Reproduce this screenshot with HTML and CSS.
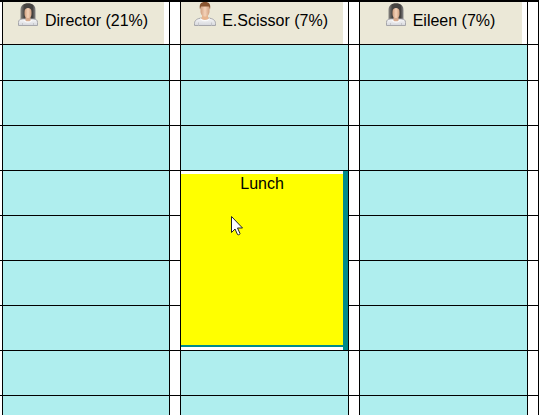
FILE: index.html
```html
<!DOCTYPE html>
<html lang="en">
<head>
<meta charset="utf-8">
<title>Staff schedule</title>
<link rel="stylesheet" href="styles.css">
</head>
<body>
<svg class="defs" aria-hidden="true">
  <defs>
    <linearGradient id="shirt" x1="0" y1="0" x2="0" y2="1">
      <stop offset="0" stop-color="#f8f8f9"/><stop offset="1" stop-color="#d6d7dc"/>
    </linearGradient>
    <linearGradient id="hair" x1="0" y1="0" x2="1" y2="0">
      <stop offset="0" stop-color="#8a8885"/><stop offset=".25" stop-color="#484542"/><stop offset=".8" stop-color="#44413f"/><stop offset="1" stop-color="#888"/>
    </linearGradient>
    <linearGradient id="skin" x1="0" y1="0" x2="1" y2="0">
      <stop offset="0" stop-color="#cf9f7f"/><stop offset=".5" stop-color="#f5d3b9"/><stop offset="1" stop-color="#cf9f7f"/>
    </linearGradient>
    <symbol id="woman" viewBox="0 0 22 24">
      <path d="M3.500 19V8C3.500 3.500 6.500 1.200 11 1.200S18.500 3.500 18.500 8v11z" fill="url(#hair)"/>
      <path d="M1.500 23.500v-3c0-2.500 1.500-3.500 4-3.500h11c2.500 0 4 1 4 3.500v3z" fill="url(#shirt)" stroke="#a6a6aa"/>
      <path d="M8.500 14h5v4c0 2-5 2-5 0z" fill="#d8ab8e"/>
      <path d="M7.500 10C7.500 7 9 6 11 6s3.500 1 3.500 4v2c0 2.500-1.500 4-3.500 4s-3.500-1.500-3.500-4z" fill="url(#skin)"/>
      <path d="M7 17.500c0 2 2 2.500 4 2.500s4-.5 4-2.500" fill="none" stroke="#fff"/>
      <path d="M5.500 21v2m11-2v2" stroke="#c5c6ca"/>
    </symbol>
    <symbol id="man" viewBox="0 0 22 24">
      <path d="M.5 23.500v-2c0-3.500 3-5 7-5.500h7c4 .5 7 2 7 5.500v2z" fill="url(#shirt)" stroke="#a6a6aa"/>
      <path d="M8 12h6v3.500l1 .5c-1 2.500-7 2.500-8 0l1-.5z" fill="#e8b58e"/>
      <path d="M6.500 4h9v5.500c0 3-2 5-4.500 5s-4.500-2-4.500-5z" fill="url(#skin)"/>
      <path d="M6 7.500C5 2.500 6.500 0 11 0s6 2.500 5 7.500L15 4.500H7z" fill="#895531"/>
      <path d="M6.500 16.500c1 3 8 3 9 0" fill="none" stroke="#fff"/>
      <path d="M4.500 20.500v3m13-3v3" stroke="#c5c6ca"/>
    </symbol>
  </defs>
</svg>
<main class="schedule">
  <table class="grid">
    <colgroup>
      <col class="edge"><col class="lead"><col class="gutter"><col><col class="gutter"><col><col class="gutter">
    </colgroup>
    <thead>
      <tr>
        <td></td>
        <th scope="col"><div class="person"><svg class="avatar" aria-hidden="true"><use href="#woman"/></svg>Director (21%)</div></th>
        <td></td>
        <th scope="col"><div class="person"><svg class="avatar" aria-hidden="true"><use href="#man"/></svg>E.Scissor (7%)</div></th>
        <td></td>
        <th scope="col"><div class="person"><svg class="avatar" aria-hidden="true"><use href="#woman"/></svg>Eileen (7%)</div></th>
        <td></td>
      </tr>
    </thead>
    <tbody>
      <tr class="first"><td></td><td class="slot"></td><td></td><td class="slot"></td><td></td><td class="slot"></td><td></td></tr>
      <tr><td></td><td class="slot"></td><td></td><td class="slot"></td><td></td><td class="slot"></td><td></td></tr>
      <tr><td></td><td class="slot"></td><td></td><td class="slot"></td><td></td><td class="slot"></td><td></td></tr>
      <tr>
        <td></td><td class="slot"></td><td></td>
        <td rowspan="4">
          <div class="event">
            <div class="event-body">Lunch</div>
            <svg class="pointer" viewBox="0 0 13 20" aria-hidden="true"><path d="M.5.500v16l3.500-3.500 2.500 5.500c1 .8 2.500 0 2.500-1L6.500 12h5z" fill="#fff" stroke="#222"/></svg>
          </div>
        </td>
        <td></td><td class="slot"></td><td></td>
      </tr>
      <tr><td></td><td class="slot"></td><td></td><td></td><td class="slot"></td><td></td></tr>
      <tr><td></td><td class="slot"></td><td></td><td></td><td class="slot"></td><td></td></tr>
      <tr><td></td><td class="slot"></td><td></td><td></td><td class="slot"></td><td></td></tr>
      <tr><td></td><td class="slot"></td><td></td><td class="slot"></td><td></td><td class="slot"></td><td></td></tr>
      <tr><td></td><td class="slot"></td><td></td><td class="slot"></td><td></td><td class="slot"></td><td></td></tr>
    </tbody>
  </table>
</main>
</body>
</html>
```
FILE: styles.css
```css
* { box-sizing: border-box; }

body {
  margin: 0;
  background: #fff;
  color: #000;
  font: 16px/20px "Liberation Sans", Arial, sans-serif;
}

.defs {
  position: absolute;
  width: 0;
  height: 0;
}

.schedule {
  height: 100vh;
  overflow: hidden;
  border-top: 2px solid #000;
}

.grid {
  width: 100%;
  table-layout: fixed;
  border-collapse: separate;
  border-spacing: 0;
}

.edge { width: 3px; }
.lead { width: 31%; }
.gutter { width: 11px; }

.grid th,
.grid td {
  padding: 0;
  border-right: 1px solid #000;
  border-bottom: 1px solid #000;
  font-weight: normal;
  vertical-align: top;
}

.grid tr { height: 45px; }
.grid thead tr { height: 43px; }
.grid .first { height: 36px; }

.slot { background: #afeeee; }

.person {
  display: flex;
  justify-content: center;
  gap: 6px;
  height: 42px;
  margin-right: 5px;
  padding: 9px 2px 0 0;
  background: #ebe8d7;
  white-space: nowrap;
}

.avatar {
  width: 22px;
  height: 24px;
  margin-top: -9px;
}

.event {
  position: relative;
  height: 179px;
  padding: 3px 0;
  border-right: 5px solid #008b8b;
}

.event-body {
  height: 100%;
  background: #ff0;
  border-bottom: 2px solid #008b8b;
  text-align: center;
}

.pointer {
  position: absolute;
  left: 50px;
  top: 45px;
  width: 13px;
  height: 20px;
}
```
